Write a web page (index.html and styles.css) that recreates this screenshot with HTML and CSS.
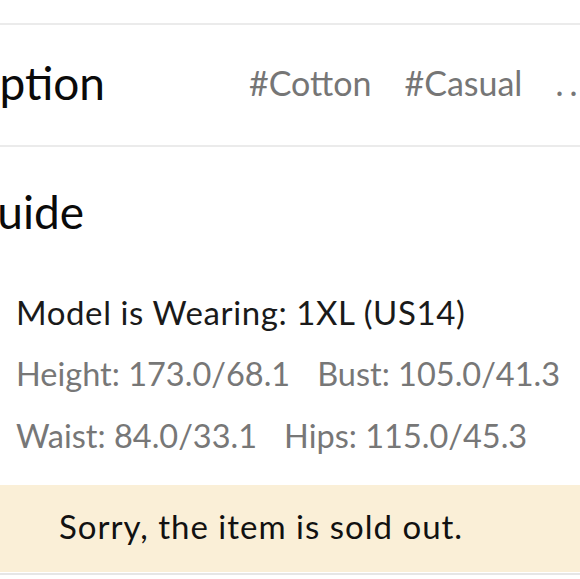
FILE: index.html
```html
<!DOCTYPE html>
<html>
<head>
<meta charset="utf-8">
<link rel="stylesheet" href="styles.css">
</head>
<body>
<div class="page">
  <div class="spacer-top"></div>
  <div class="divider"></div>
  <section class="desc-row">
    <div class="clip clip-desc"><h2 class="title">Description</h2></div>
    <ul class="tags">
      <li class="tag">#Cotton</li>
      <li class="tag">#Casual</li>
      <li class="tag more">...</li>
    </ul>
  </section>
  <div class="divider"></div>
  <section class="size">
    <div class="clip clip-size"><h2 class="title">Size Guide</h2></div>
    <div class="model">
      <p class="line dark">Model is Wearing: 1XL (US14)</p>
      <p class="line muted"><span class="m">Height: 173.0/68.1</span><span class="m">Bust: 105.0/41.3</span></p>
      <p class="line muted"><span class="m">Waist: 84.0/33.1</span><span class="m">Hips: 115.0/45.3</span></p>
    </div>
  </section>
  <div class="banner">Sorry, the item is sold out.</div>
  <div class="bottom-line"></div>
</div>
</body>
</html>
```
FILE: styles.css
```css
html, body {
  margin: 0;
  padding: 0;
  background: #ffffff;
  overflow: hidden;
}
.page {
  font-family: Lato, "Liberation Sans", sans-serif;
  color: #111;
  width: 580px;
}
.spacer-top { height: 23px; }
.divider { height: 2px; background: #ebebeb; }
.desc-row {
  height: 120px;
  display: flex;
  align-items: center;
  padding-bottom: 5px;
  box-sizing: border-box;
  white-space: nowrap;
}
.clip {
  overflow: hidden;
  display: flex;
  justify-content: flex-end;
  white-space: nowrap;
  flex: none;
}
.clip-desc { width: 105px; }
.clip-size { width: 84px; }
.title {
  margin: 0;
  font-weight: 400;
  font-size: 46px;
  line-height: 1.2;
  color: #0a0a0a;
  flex: none;
}
.tags {
  list-style: none;
  margin: 0 0 0 144px;
  padding: 0;
  display: flex;
  gap: 33px;
  font-size: 34px;
  color: #767676;
  flex: none;
}
.tag { margin: 0; }
.more { letter-spacing: 6px; }
.size {
  padding-top: 37px;
}
.model {
  padding-left: 16px;
  margin-top: 42px;
}
.line {
  margin: 0;
  font-size: 33px;
  line-height: 62px;
  white-space: nowrap;
  display: flex;
  gap: 27px;
}
.dark { color: #1a1a1a; letter-spacing: 0.6px; }
.muted { color: #777777; font-size: 32.5px; }
.banner {
  margin-top: 18px;
  height: 87px;
  background: #faefd7;
  font-size: 33px;
  line-height: 83px;
  padding-left: 59px;
  letter-spacing: 1px;
  color: #111;
  white-space: nowrap;
  box-sizing: border-box;
}
.bottom-line {
  margin-top: 1px;
  height: 2px;
  background: #e6e6e6;
}
```
